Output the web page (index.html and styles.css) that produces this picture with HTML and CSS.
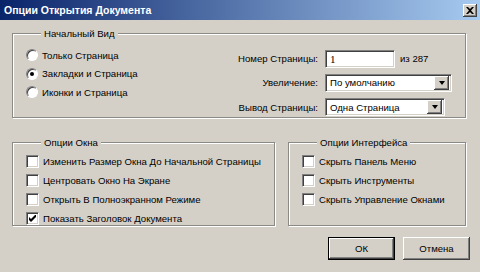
FILE: index.html
```html
<!DOCTYPE html>
<html lang="ru">
<head>
    <meta charset="UTF-8">
    <title>Опции Открытия Документа</title>
    <link rel="stylesheet" href="styles.css">
</head>
<body>
    <div class="dialog">
        <div class="titlebar">
            <span class="title">Опции Открытия Документа</span>
            <span class="close">
                <svg width="8" height="7" viewBox="0 0 8 7"><path d="M0 0h2l2 2 2-2h2L5 3.5 8 7H6L4 5 2 7H0l3-3.5z" fill="#000"/></svg>
            </span>
        </div>
        <div class="content">
            <fieldset class="group view">
                <legend>Начальный Вид</legend>
                <div class="radios">
                    <label class="opt"><span class="radio"></span>Только Страница</label>
                    <label class="opt"><span class="radio on"></span>Закладки и Страница</label>
                    <label class="opt"><span class="radio"></span>Иконки и Страница</label>
                </div>
                <div class="fields">
                    <span class="lbl">Номер Страницы:</span>
                    <div class="pagebox"><span class="edit">1</span><span class="of">из 287</span></div>
                    <span class="lbl">Увеличение:</span>
                    <div class="combo wide"><span>По умолчанию</span><span class="drop"><i></i></span></div>
                    <span class="lbl">Вывод Страницы:</span>
                    <div class="combo"><span>Одна Страница</span><span class="drop"><i></i></span></div>
                </div>
            </fieldset>
            <div class="row">
                <fieldset class="group win">
                    <legend>Опции Окна</legend>
                    <label class="opt"><span class="check"></span>Изменить Размер Окна До Начальной Страницы</label>
                    <label class="opt"><span class="check"></span>Центровать Окно На Экране</label>
                    <label class="opt"><span class="check"></span>Открыть В Полноэкранном Режиме</label>
                    <label class="opt"><span class="check"><svg width="7" height="7" viewBox="0 0 7 7"><path d="M0 2v3l2 2 5-5V-1L2 4z" fill="#000"/></svg></span>Показать Заголовок Документа</label>
                </fieldset>
                <fieldset class="group ui">
                    <legend>Опции Интерфейса</legend>
                    <label class="opt"><span class="check"></span>Скрыть Панель Меню</label>
                    <label class="opt"><span class="check"></span>Скрыть Инструменты</label>
                    <label class="opt"><span class="check"></span>Скрыть Управление Окнами</label>
                </fieldset>
            </div>
            <div class="actions">
                <button class="btn default">ОК</button>
                <button class="btn">Отмена</button>
            </div>
        </div>
    </div>
</body>
</html>
```

FILE: styles.css
```css
body { margin: 0; background: #d4d0c8; font-family: "Liberation Sans", Arial, sans-serif; font-size: 9.6px; color: #000; }
.dialog { width: 480px; height: 272px; box-sizing: border-box; background: #d4d0c8; overflow: hidden; }

.titlebar { height: 20px; display: flex; align-items: center; justify-content: space-between; padding: 0 3px 0 4px; background: linear-gradient(to right, #0a246a, #a6caf0); }
.title { color: #fff; font-weight: bold; font-size: 10.5px; }
.close { width: 14px; height: 13px; display: flex; align-items: center; justify-content: center; background: #d4d0c8; box-shadow: inset -1px -1px #404040, inset 1px 1px #fff, inset -2px -2px #808080; }

.content { padding: 7px 14px 0 12px; }

.group { margin: 0; padding: 0; min-width: 0; box-sizing: border-box; border: 1px solid #8c8a85; box-shadow: inset 1px 1px #fff, 1px 1px #fff; }
.group legend { margin-left: 15px; padding: 0 3px; line-height: 13px; background: #d4d0c8; }

.view { height: 91px; display: flex; padding: 8px 0 0 13px; }
.radios { display: flex; flex-direction: column; gap: 4.5px; width: 190px; }
.opt { display: flex; align-items: center; gap: 4px; height: 14px; white-space: nowrap; }

.radio { width: 12px; height: 12px; border-radius: 50%; background: #fff; box-sizing: border-box; border: 1px solid; border-color: #808080 #fff #fff #808080; box-shadow: inset 1px 1px #404040; display: flex; align-items: center; justify-content: center; }
.radio.on::after { content: ""; width: 4px; height: 4px; border-radius: 50%; background: #000; }

.check { width: 13px; height: 13px; box-sizing: border-box; background: #fff; border: 1px solid; border-color: #808080 #fff #fff #808080; box-shadow: inset 1px 1px #404040, inset -1px -1px #d4d0c8; display: flex; align-items: center; justify-content: center; }

.fields { display: grid; grid-template-columns: 102px auto; column-gap: 7px; row-gap: 5px; align-items: center; margin-top: 1px; }
.lbl { text-align: right; }
.pagebox { display: flex; align-items: center; gap: 5px; }
.edit, .combo { height: 18px; box-sizing: border-box; background: #fff; border: 1px solid; border-color: #808080 #fff #fff #808080; box-shadow: inset 1px 1px #404040, inset -1px -1px #d4d0c8; display: flex; align-items: center; padding-left: 4px; }
.edit { width: 70px; font-family: "Liberation Serif", serif; font-size: 11px; }
.combo { width: 120px; justify-content: space-between; padding-right: 2px; }
.combo.wide { width: 127px; }
.drop { width: 15px; height: 14px; background: #d4d0c8; box-shadow: inset -1px -1px #404040, inset 1px 1px #fff, inset -2px -2px #808080; display: flex; align-items: center; justify-content: center; }
.drop i { width: 0; height: 0; border: 3.5px solid transparent; border-top: 4px solid #000; border-bottom: 0; }

.row { display: flex; gap: 13px; margin-top: 18px; }
.win, .ui { height: 90px; padding: 5px 0 0 13px; display: flex; flex-direction: column; gap: 5px; }
.win { width: 263px; }
.ui { flex: 1; }

.actions { display: flex; justify-content: flex-end; gap: 8px; margin: 11px -4px 0 0; }
.btn { width: 67px; height: 23px; background: #d4d0c8; font: inherit; border: none; box-shadow: inset -1px -1px #404040, inset 1px 1px #fff, inset -2px -2px #808080; }
.btn.default { box-shadow: inset 0 0 0 1px #000, inset -2px -2px #404040, inset 2px 2px #fff, inset -3px -3px #808080; }
```
